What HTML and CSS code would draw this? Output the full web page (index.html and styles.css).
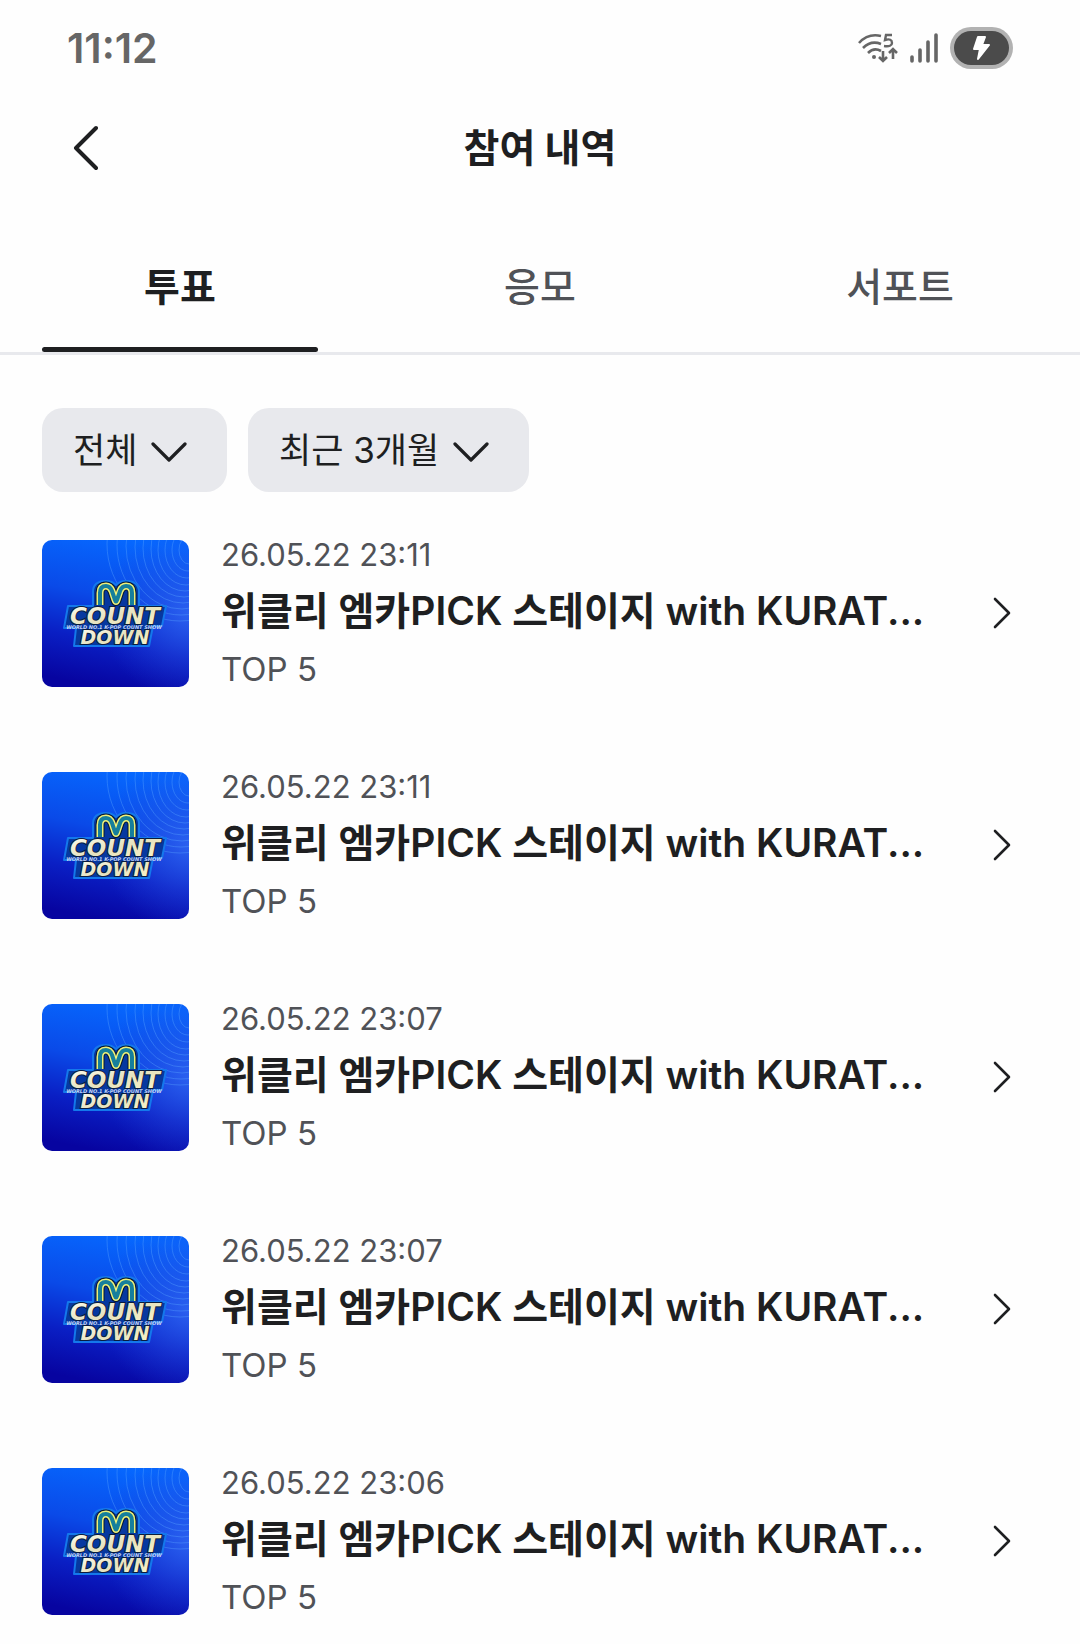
FILE: index.html
```html
<!DOCTYPE html>
<html lang="ko">

<head>
    <meta charset="UTF-8">
    <meta name="viewport" content="width=device-width, initial-scale=1.0">
    <title>참여 내역</title>
    <link rel="stylesheet" href="styles.css">
</head>

<body>

    <!-- shared shapes -->
    <svg class="defs" aria-hidden="true">
        <defs>
            <linearGradient id="sky" x1="0.6" y1="0" x2="0.4" y2="1">
                <stop offset="0" stop-color="#0668ff" />
                <stop offset="0.4" stop-color="#0a4ae8" />
                <stop offset="0.7" stop-color="#0a1fc4" />
                <stop offset="1" stop-color="#0704a0" />
            </linearGradient>
            <radialGradient id="glow" cx="1" cy="0.5" r="0.6">
                <stop offset="0" stop-color="#3466f2" stop-opacity="0.8" />
                <stop offset="1" stop-color="#2040d8" stop-opacity="0" />
            </radialGradient>
            <linearGradient id="gold" x1="0" y1="0" x2="1" y2="1">
                <stop offset="0" stop-color="#fffef0" />
                <stop offset="0.5" stop-color="#e6e2bf" />
                <stop offset="1" stop-color="#fbf7c8" />
            </linearGradient>
        </defs>
        <symbol id="cover" viewBox="0 0 147 147">
            <rect width="147" height="147" fill="url(#sky)" />
            <rect width="147" height="147" fill="url(#glow)" />
            <g fill="none" stroke="#5aa5ff" stroke-opacity="0.4" stroke-width="1">
                <ellipse cx="147" cy="10" rx="10" ry="14" />
                <ellipse cx="146" cy="10" rx="16" ry="21" />
                <ellipse cx="145" cy="10" rx="22" ry="28" />
                <ellipse cx="144" cy="10" rx="28" ry="35" />
                <ellipse cx="143" cy="9" rx="34" ry="42" />
                <ellipse cx="142" cy="8" rx="41" ry="49" />
                <ellipse cx="141" cy="7" rx="48" ry="56" />
                <ellipse cx="140" cy="6" rx="56" ry="63" />
                <ellipse cx="139" cy="5" rx="64" ry="70" />
                <ellipse cx="138" cy="4" rx="73" ry="77" />
            </g>
            <!-- blue plate behind the logo -->
            <path d="M51 66V52q0-11 13-11 6 0 10 4 4-4 10-4 13 0 13 11v14h27l-4 20h-9l-4 20H32l2-18H22l4-22z" fill="#0638a0" stroke="#1478ec" stroke-width="2" stroke-linejoin="round" />
            <g fill="none" stroke-linejoin="round">
                <path d="M58 65V53q0-7 6-7 4 0 6 5l3 9q1 3 2 0l3-9q2-5 6-5 6 0 6 7v12" stroke="#07182f" stroke-width="9" />
                <path d="M58 65V53q0-7 6-7 4 0 6 5l3 9q1 3 2 0l3-9q2-5 6-5 6 0 6 7v12" stroke="#eef07a" stroke-width="7" />
                <path d="M58 65V53q0-7 6-7 4 0 6 5l3 9q1 3 2 0l3-9q2-5 6-5 6 0 6 7v12" stroke="#167f9c" stroke-width="4" />
            </g>
        </symbol>
        <symbol id="next" viewBox="0 0 20 32">
            <path d="M3 2l14 14L3 30" fill="none" stroke="#1e1f21" stroke-width="2.6" stroke-linecap="round" stroke-linejoin="round" />
        </symbol>
        <symbol id="down" viewBox="0 0 36 21">
            <path d="M2 2l16 16L34 2" fill="none" stroke="#1e1f21" stroke-width="3.2" stroke-linecap="round" stroke-linejoin="round" />
        </symbol>
    </svg>

    <!-- status bar -->
    <div class="status">
        <span class="clock">11:12</span>
        <div class="status-icons">
            <svg class="wifi" width="40" height="32" viewBox="0 0 40 32" fill="none" stroke="#666" stroke-width="2.6">
                <path d="M1 11Q10 1 23 4M5 16q8-8 18-4M10 21q6-6 13-2" />
                <circle cx="16" cy="25" r="2" fill="#666" stroke="none" />
                <path d="M34 3h-6l-1 5q7-2 7 3 0 4-8 3" stroke-width="2.4" />
                <path d="M25 19v10M21 25l4 4 4-4M35 27V17M31 21l4-4 4 4" />
            </svg>
            <svg class="signal" width="28" height="30" viewBox="1 0 28 30" stroke="#666" stroke-width="3.6" stroke-linecap="round">
                <path d="M3 24v4M11 17v11M19 9v19M27 2v26" />
            </svg>
            <svg class="battery" width="63" height="42" viewBox="0 0 63 42">
                <rect width="63" height="42" rx="21" fill="#b2b2b2" />
                <rect x="4" y="4" width="55" height="34" rx="17" fill="#4b4b4b" />
                <path d="M28 10h7l-3 8h7L28 32l2-10h-6z" fill="#fff" stroke="#fff" stroke-width="2" stroke-linejoin="round" />
            </svg>
        </div>
    </div>

    <!-- head -->
    <header class="headbar">
        <button class="back" type="button" aria-label="뒤로">
            <svg width="26" height="46" viewBox="0 0 26 46">
                <path d="M24 3L4 23l20 20" fill="none" stroke="#1e1f21" stroke-width="4" stroke-linecap="round" stroke-linejoin="round" />
            </svg>
        </button>
        <h1>참여 내역</h1>
    </header>

    <nav class="tabs">
        <a class="tab active" href="#vote">투표</a>
        <a class="tab" href="#apply">응모</a>
        <a class="tab" href="#support">서포트</a>
    </nav>

    <!-- filters -->
    <div class="filters">
        <div class="filter">
            <select aria-label="상태">
                <option>전체</option>
            </select>
            <svg width="36" height="21"><use href="#down" /></svg>
        </div>
        <div class="filter">
            <select aria-label="기간">
                <option>최근 3개월</option>
                <option>최근 1개월</option>
            </select>
            <svg width="36" height="21"><use href="#down" /></svg>
        </div>
    </div>

    <!-- list -->
    <main class="list" id="vote">
        <a class="item" href="#vote-1">
            <svg class="cover" viewBox="0 0 147 147">
                <use href="#cover" />
                <text class="cover-count" x="73" y="84">COUNT</text>
                <text class="cover-small" x="72" y="89">WORLD NO.1 K-POP COUNT SHOW</text>
                <text class="cover-down" x="73" y="104">DOWN</text>
            </svg>
            <div class="info">
                <time>26.05.22 23:11</time>
                <h2>위클리 엠카PICK 스테이지 with KURAT...</h2>
                <p>TOP 5</p>
            </div>
            <svg class="next"><use href="#next" /></svg>
        </a>
        <a class="item" href="#vote-2">
            <svg class="cover" viewBox="0 0 147 147">
                <use href="#cover" />
                <text class="cover-count" x="73" y="84">COUNT</text>
                <text class="cover-small" x="72" y="89">WORLD NO.1 K-POP COUNT SHOW</text>
                <text class="cover-down" x="73" y="104">DOWN</text>
            </svg>
            <div class="info">
                <time>26.05.22 23:11</time>
                <h2>위클리 엠카PICK 스테이지 with KURAT...</h2>
                <p>TOP 5</p>
            </div>
            <svg class="next"><use href="#next" /></svg>
        </a>
        <a class="item" href="#vote-3">
            <svg class="cover" viewBox="0 0 147 147">
                <use href="#cover" />
                <text class="cover-count" x="73" y="84">COUNT</text>
                <text class="cover-small" x="72" y="89">WORLD NO.1 K-POP COUNT SHOW</text>
                <text class="cover-down" x="73" y="104">DOWN</text>
            </svg>
            <div class="info">
                <time>26.05.22 23:07</time>
                <h2>위클리 엠카PICK 스테이지 with KURAT...</h2>
                <p>TOP 5</p>
            </div>
            <svg class="next"><use href="#next" /></svg>
        </a>
        <a class="item" href="#vote-4">
            <svg class="cover" viewBox="0 0 147 147">
                <use href="#cover" />
                <text class="cover-count" x="73" y="84">COUNT</text>
                <text class="cover-small" x="72" y="89">WORLD NO.1 K-POP COUNT SHOW</text>
                <text class="cover-down" x="73" y="104">DOWN</text>
            </svg>
            <div class="info">
                <time>26.05.22 23:07</time>
                <h2>위클리 엠카PICK 스테이지 with KURAT...</h2>
                <p>TOP 5</p>
            </div>
            <svg class="next"><use href="#next" /></svg>
        </a>
        <a class="item" href="#vote-5">
            <svg class="cover" viewBox="0 0 147 147">
                <use href="#cover" />
                <text class="cover-count" x="73" y="84">COUNT</text>
                <text class="cover-small" x="72" y="89">WORLD NO.1 K-POP COUNT SHOW</text>
                <text class="cover-down" x="73" y="104">DOWN</text>
            </svg>
            <div class="info">
                <time>26.05.22 23:06</time>
                <h2>위클리 엠카PICK 스테이지 with KURAT...</h2>
                <p>TOP 5</p>
            </div>
            <svg class="next"><use href="#next" /></svg>
        </a>
    </main>

</body>

</html>
```
FILE: styles.css
```css
:root {
    --ink: #1e1f21;
    --gray: #505257;
    --line: #e8e9ed;
    --side: 42px;
}

* {
    box-sizing: border-box;
}

body {
    margin: 0;
    background: #fefefe;
    color: var(--ink);
    font-family: Inter, "Noto Sans CJK KR", sans-serif;
}

h1,
h2,
p {
    margin: 0;
}

a {
    color: inherit;
    text-decoration: none;
}

.defs {
    position: absolute;
    width: 0;
    height: 0;
}

/* status bar */
.status {
    display: flex;
    align-items: center;
    justify-content: space-between;
    height: 96px;
    padding: 0 67px;
}

.clock {
    color: #666;
    font-size: 41px;
    font-weight: 600;
}

.status-icons {
    display: flex;
    align-items: center;
    gap: 12px;
}

/* head */
.headbar {
    display: grid;
    grid-template-columns: 1fr auto 1fr;
    align-items: center;
    height: 104px;
    padding: 0 72px;
}

.headbar h1 {
    font-size: 39px;
    font-weight: 700;
    line-height: 56px;
}

.back {
    display: flex;
    justify-self: start;
    padding: 0;
    border: none;
    background: none;
    cursor: pointer;
}

/* tabs */
.tabs {
    display: flex;
    margin-top: 26px;
    border-bottom: 3px solid var(--line);
}

.tab {
    display: flex;
    flex: 1;
    flex-direction: column;
    padding: 0 var(--side);
    color: var(--gray);
    font-size: 39px;
    font-weight: 500;
    line-height: 121px;
    text-align: center;
}

.tab::after {
    content: "";
    height: 5px;
    border-radius: 3px;
}

.tab.active {
    color: var(--ink);
    font-weight: 600;
}

.tab.active::after {
    background: var(--ink);
}

/* filters */
.filters {
    display: flex;
    gap: 21px;
    padding: 53px var(--side) 47px;
}

.filter {
    position: relative;
}

.filter select {
    height: 84px;
    padding: 0 89px 0 31px;
    border: none;
    border-radius: 21px;
    appearance: none;
    background: var(--line);
    color: var(--ink);
    font-family: inherit;
    font-size: 35px;
    cursor: pointer;
}

.filter svg {
    position: absolute;
    top: 34px;
    right: 40px;
    pointer-events: none;
}

/* list */
.list {
    display: grid;
    gap: 84px;
    padding: 0 var(--side) 28px;
}

.item {
    display: flex;
    align-items: center;
}

.cover {
    flex: none;
    width: 147px;
    height: 147px;
    border-radius: 10px;
}

.info {
    flex: 1;
    min-width: 0;
    margin-left: 32px;
    color: var(--gray);
}

.info time {
    display: block;
    font-size: 31px;
    line-height: 32px;
}

.info h2 {
    margin: 12px 0;
    color: var(--ink);
    font-size: 39px;
    font-weight: 600;
    line-height: 56px;
    white-space: nowrap;
}

.info p {
    font-size: 33px;
    line-height: 36px;
}

.next {
    flex: none;
    width: 20px;
    height: 32px;
    margin-right: 26px;
}

/* cover logo */
.cover text {
    font-family: "DejaVu Sans", sans-serif;
    font-style: italic;
    font-weight: 700;
    text-anchor: middle;
}

.cover .cover-count,
.cover .cover-down {
    fill: url(#gold);
    stroke: #0b1c3c;
    stroke-width: 2px;
    paint-order: stroke;
}

.cover-count {
    font-size: 23px;
}

.cover-down {
    font-size: 19px;
}

.cover-small {
    fill: #c3d4f5;
    font-size: 5px;
}
```
